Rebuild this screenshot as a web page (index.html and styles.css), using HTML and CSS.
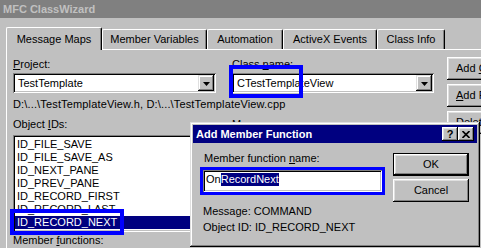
FILE: index.html
```html
<!DOCTYPE html>
<html lang="en">
<head>
    <meta charset="UTF-8">
    <title>MFC ClassWizard</title>
    <link rel="stylesheet" href="styles.css">
</head>
<body>
    <div class="window">
        <div class="titlebar">MFC ClassWizard</div>

        <div class="tabs">
            <div class="tab tab-maps active">Message Maps</div>
            <div class="tab tab-vars">Member Variables</div>
            <div class="tab tab-auto">Automation</div>
            <div class="tab tab-events">ActiveX Events</div>
            <div class="tab tab-info">Class Info</div>
        </div>

        <div class="panel">
            <div class="main">
                <div class="row">
                    <div class="field">
                        <div class="label"><u>P</u>roject:</div>
                        <div class="combo">
                            <span>TestTemplate</span>
                            <span class="drop"><svg width="7" height="4" viewBox="0 0 7 4"><polygon points="0,0 7,0 3.5,4" fill="#000"/></svg></span>
                        </div>
                    </div>
                    <div class="field wide">
                        <div class="label">Class <u>n</u>ame:</div>
                        <div class="combo">
                            <span>CTestTemplateView</span>
                            <span class="drop"><svg width="7" height="4" viewBox="0 0 7 4"><polygon points="0,0 7,0 3.5,4" fill="#000"/></svg></span>
                        </div>
                    </div>
                </div>

                <div class="path">D:\...\TestTemplateView.h, D:\...\TestTemplateView.cpp</div>

                <div class="row lists">
                    <div class="field">
                        <div class="label">Object <u>I</u>Ds:</div>
                        <div class="list">
                            <div class="item">ID_FILE_SAVE</div>
                            <div class="item">ID_FILE_SAVE_AS</div>
                            <div class="item">ID_NEXT_PANE</div>
                            <div class="item">ID_PREV_PANE</div>
                            <div class="item">ID_RECORD_FIRST</div>
                            <div class="item">ID_RECORD_LAST</div>
                            <div class="item selected">ID_RECORD_NEXT</div>
                        </div>
                        <div class="label below">Member <u>f</u>unctions:</div>
                    </div>
                    <div class="field wide">
                        <div class="label">Messa<u>g</u>es:</div>
                        <div class="list"></div>
                    </div>
                </div>
            </div>

            <div class="side">
                <div class="btn">Add <u>C</u>lass...</div>
                <div class="btn"><u>A</u>dd Function...</div>
                <div class="btn"><u>D</u>elete Function</div>
            </div>
        </div>

        <!-- annotation boxes -->
        <div class="mark mark-class"></div>
        <div class="mark mark-id"></div>

        <div class="dialog">
            <div class="dlg-title">
                <span>Add Member Function</span>
                <span class="caption-btns">
                    <span class="cap-btn help">?</span>
                    <span class="cap-btn"><svg width="8" height="7" viewBox="0 0 8 7"><path d="M0.5 0 L7.5 7 M7.5 0 L0.5 7" stroke="#000" stroke-width="1.6"/></svg></span>
                </span>
            </div>
            <div class="dlg-body">
                <div class="dlg-left">
                    <div class="label indent">Member function <u>n</u>ame:</div>
                    <div class="edit">On<span class="sel">RecordNext</span></div>
                    <div class="info first">Message: COMMAND</div>
                    <div class="info">Object ID: ID_RECORD_NEXT</div>
                </div>
                <div class="dlg-right">
                    <div class="btn default">OK</div>
                    <div class="btn cancel">Cancel</div>
                </div>
            </div>
        </div>
    </div>
</body>
</html>
```

FILE: styles.css
```css
body {
    margin: 0;
    font-family: "Liberation Sans", Arial, sans-serif;
    font-size: 11px;
    line-height: 13px;
    color: #000;
}

.window {
    position: relative;
    width: 481px;
    height: 248px;
    background: #c0c0c0;
    overflow: hidden;
}

.titlebar {
    height: 18px;
    line-height: 18px;
    padding-left: 3px;
    background: #808080;
    color: #c0c0c0;
    font-weight: bold;
}

/* tab strip */
.tabs {
    display: flex;
    align-items: flex-end;
    height: 22px;
    margin-top: 9px;
    padding-left: 6px;
}

.tab {
    box-sizing: border-box;
    height: 20px;
    line-height: 18px;
    text-align: center;
    white-space: nowrap;
    border-top: 1px solid #fff;
    border-left: 1px solid #fff;
    border-right: 1px solid #000;
    border-radius: 2px 2px 0 0;
    box-shadow: inset -1px 0 #808080;
    flex: none;
}

.tab.active {
    position: relative;
    z-index: 1;
    height: 23px;
    padding-top: 2px;
    margin-bottom: -1px;
    background: #c0c0c0;
}

.tab-maps { width: 96px; }
.tab-vars { width: 105px; }
.tab-auto { width: 76px; }
.tab-events { width: 94px; }
.tab-info { width: 68px; }

.panel {
    display: flex;
    height: 200px;
    margin-left: 6px;
    padding: 7px 0 0 6px;
    border-top: 1px solid #fff;
    border-left: 1px solid #fff;
}

.main {
    flex: none;
    width: 421px;
    padding-top: 1px;
}

.row {
    display: flex;
    gap: 16px;
}

.field {
    flex: none;
    width: 203px;
}

.field.wide {
    width: 202px;
}

.label {
    height: 13px;
    white-space: nowrap;
}

.combo {
    box-sizing: border-box;
    display: flex;
    justify-content: space-between;
    height: 20px;
    margin-top: 2px;
    padding: 2px 2px 2px 5px;
    line-height: 16px;
    background: #fff;
    box-shadow: inset 1px 1px #808080, inset -1px -1px #fff, inset 2px 2px #000, inset -2px -2px #c0c0c0;
}

.drop {
    box-sizing: border-box;
    display: flex;
    align-items: center;
    justify-content: center;
    width: 16px;
    height: 16px;
    padding-top: 1px;
    background: #c0c0c0;
    box-shadow: inset -1px -1px #000, inset 1px 1px #dfdfdf, inset -2px -2px #808080, inset 2px 2px #fff;
}

.path {
    margin-top: 5px;
    white-space: nowrap;
    letter-spacing: 0.15px;
}

.lists {
    margin-top: 7px;
}

.list {
    box-sizing: border-box;
    height: 97px;
    margin-top: 4px;
    padding: 3px 2px 2px;
    background: #fff;
    box-shadow: inset 1px 1px #808080, inset -1px -1px #fff, inset 2px 2px #000, inset -2px -2px #c0c0c0;
}

.item {
    padding-left: 2px;
    white-space: nowrap;
}

.item.selected {
    background: #000080;
    color: #fff;
}

.label.below {
    margin-top: 2px;
}

.side {
    flex: none;
    display: flex;
    flex-direction: column;
    gap: 4px;
    margin-left: 13px;
}

.btn {
    box-sizing: border-box;
    width: 80px;
    height: 23px;
    line-height: 23px;
    padding-left: 9px;
    white-space: nowrap;
    background: #c0c0c0;
    box-shadow: inset -1px -1px #000, inset 1px 1px #fff, inset -2px -2px #808080, inset 2px 2px #dfdfdf;
}

/* blue annotation boxes */
.mark {
    position: absolute;
    box-sizing: border-box;
    border: 4px solid #0000ff;
}

.mark-class {
    left: 229px;
    top: 65px;
    width: 74px;
    height: 33px;
}

.mark-id {
    left: 10px;
    top: 209px;
    width: 114px;
    height: 26px;
}

/* Add Member Function dialog */
.dialog {
    position: absolute;
    left: 190px;
    top: 122px;
    box-sizing: border-box;
    width: 290px;
    height: 125px;
    padding: 3px;
    background: #c0c0c0;
    box-shadow: inset -1px -1px #000, inset 1px 1px #dfdfdf, inset -2px -2px #808080, inset 2px 2px #fff;
}

.dlg-title {
    display: flex;
    justify-content: space-between;
    align-items: center;
    height: 18px;
    padding: 0 3px 0 3px;
    background: #000080;
    color: #fff;
    font-weight: bold;
    line-height: 18px;
}

.caption-btns {
    display: flex;
}

.cap-btn {
    box-sizing: border-box;
    display: flex;
    align-items: center;
    justify-content: center;
    width: 16px;
    height: 14px;
    background: #c0c0c0;
    color: #000;
    font-size: 11px;
    line-height: 14px;
    box-shadow: inset -1px -1px #000, inset 1px 1px #fff, inset -2px -2px #808080, inset 2px 2px #dfdfdf;
}

.cap-btn.help {
    padding-bottom: 1px;
}

.dlg-body {
    display: flex;
    justify-content: space-between;
}

.dlg-left {
    padding: 9px 0 0 10px;
}

.label.indent {
    padding-left: 1px;
}

.edit {
    box-sizing: border-box;
    width: 179px;
    height: 22px;
    margin-top: 5px;
    padding: 3px 2px 2px 3px;
    background: #fff;
    white-space: nowrap;
    outline: 3px solid #0000ff;
    box-shadow: inset 1px 1px #808080, inset -1px -1px #fff, inset 2px 2px #000, inset -2px -2px #c0c0c0;
}

.sel {
    display: inline-block;
    background: #000080;
    color: #fff;
}

.info {
    margin-top: 3px;
}

.info.first {
    margin-top: 13px;
}

.dlg-right {
    display: flex;
    flex-direction: column;
    gap: 3px;
    padding: 10px 8px 0 0;
}

.dlg-right .btn {
    width: 76px;
    padding-left: 0;
    text-align: center;
}

.btn.default {
    border: 1px solid #000;
    line-height: 21px;
}
```
